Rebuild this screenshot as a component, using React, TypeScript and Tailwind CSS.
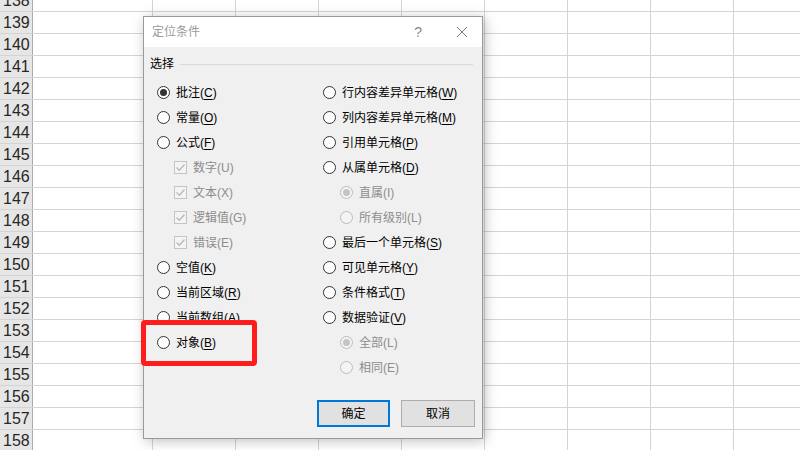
import React from 'react';

const rows = Array.from({ length: 21 }, (_, i) => 138 + i);
const colWidths = [120, 83, 83, 83, 83, 83, 83, 83, 83];

type Item = {
  label: string;
  key?: string;
  kind: 'radio' | 'check';
  checked?: boolean;
  disabled?: boolean;
  indent?: boolean;
};

const leftItems: Item[] = [
  { label: '批注', key: 'C', kind: 'radio', checked: true },
  { label: '常量', key: 'O', kind: 'radio' },
  { label: '公式', key: 'F', kind: 'radio' },
  { label: '数字(U)', kind: 'check', checked: true, disabled: true, indent: true },
  { label: '文本(X)', kind: 'check', checked: true, disabled: true, indent: true },
  { label: '逻辑值(G)', kind: 'check', checked: true, disabled: true, indent: true },
  { label: '错误(E)', kind: 'check', checked: true, disabled: true, indent: true },
  { label: '空值', key: 'K', kind: 'radio' },
  { label: '当前区域', key: 'R', kind: 'radio' },
  { label: '当前数组', key: 'A', kind: 'radio' },
  { label: '对象', key: 'B', kind: 'radio' },
];

const rightItems: Item[] = [
  { label: '行内容差异单元格', key: 'W', kind: 'radio' },
  { label: '列内容差异单元格', key: 'M', kind: 'radio' },
  { label: '引用单元格', key: 'P', kind: 'radio' },
  { label: '从属单元格', key: 'D', kind: 'radio' },
  { label: '直属(I)', kind: 'radio', checked: true, disabled: true, indent: true },
  { label: '所有级别(L)', kind: 'radio', disabled: true, indent: true },
  { label: '最后一个单元格', key: 'S', kind: 'radio' },
  { label: '可见单元格', key: 'Y', kind: 'radio' },
  { label: '条件格式', key: 'T', kind: 'radio' },
  { label: '数据验证', key: 'V', kind: 'radio' },
  { label: '全部(L)', kind: 'radio', checked: true, disabled: true, indent: true },
  { label: '相同(E)', kind: 'radio', disabled: true, indent: true },
];

const Radio = ({ checked, disabled }: { checked?: boolean; disabled?: boolean }) => (
  <span
    className={`flex h-[13px] w-[13px] shrink-0 items-center justify-center rounded-full border ${
      disabled ? 'border-[#bcbcbc] bg-[#f4f4f4]' : 'border-[#333] bg-white'
    }`}
  >
    {checked && (
      <span className={`h-[7px] w-[7px] rounded-full ${disabled ? 'bg-[#c4c4c4]' : 'bg-[#333]'}`} />
    )}
  </span>
);

const Check = () => (
  <span className="flex h-[13px] w-[13px] shrink-0 items-center justify-center border border-[#c4c4c4] bg-[#f4f4f4]">
    <svg width="11" height="11" viewBox="0 0 11 11">
      <path d="M1.5 5.5 L4.3 8.3 L9.5 2.5" fill="none" stroke="#b8b8b8" strokeWidth="1.3" />
    </svg>
  </span>
);

const Option = ({ item }: { item: Item }) => (
  <div className={`flex h-[25px] items-center gap-[6px] ${item.indent ? 'pl-[17px]' : ''}`}>
    {item.kind === 'radio' ? <Radio checked={item.checked} disabled={item.disabled} /> : <Check />}
    <span className={item.disabled ? 'text-[#8d8d8d]' : 'text-[#000]'}>
      {item.label}
      {item.key && (
        <>
          (<span className="underline underline-offset-2">{item.key}</span>)
        </>
      )}
    </span>
  </div>
);

const App = () => {
  return (
    <div
      className="relative h-[450px] w-[800px] overflow-hidden bg-white"
      style={{ fontFamily: '"Liberation Sans", "Noto Sans CJK SC", sans-serif' }}
    >
      {/* sheet grid */}
      <div className="-mt-[10px] flex flex-col">
        {rows.map((r) => (
          <div key={r} className="flex h-[22px] border-b border-[#d4d4d4]">
            <div className="flex w-[33px] shrink-0 items-center border-r border-[#ababab] bg-[#e6e6e6] pl-[3px] text-[16px] text-[#262626]">
              {r}
            </div>
            {colWidths.map((w, i) => (
              <div key={i} className="shrink-0 border-r border-[#d4d4d4]" style={{ width: w }} />
            ))}
          </div>
        ))}
      </div>

      {/* dialog */}
      <div className="absolute left-[143px] top-[16px] flex h-[423px] w-[340px] flex-col border border-[#9a9a9a] bg-[#f0f0f0] text-[12px] shadow-[2px_2px_12px_rgba(0,0,0,0.25)]">
        <div className="flex h-[30px] shrink-0 items-center bg-white pl-[8px] pr-[14px] text-[#9b9b9b]">
          <span className="flex-1">定位条件</span>
          <span className="mr-[34px] text-[14px] text-[#8a8a8a]">?</span>
          <svg width="12" height="12" viewBox="0 0 12 12">
            <path d="M1 1 L11 11 M11 1 L1 11" stroke="#7a7a7a" strokeWidth="1" />
          </svg>
        </div>

        <div className="flex flex-1 flex-col px-[6px] pt-[8px]">
          <div className="flex h-[18px] items-center gap-[6px] text-[#000]">
            <span>选择</span>
            <span className="mr-[3px] h-px flex-1 bg-[#d9d9d9]" />
          </div>

          <div className="mt-[7px] flex">
            <div className="flex w-[173px] flex-col pl-[7px]">
              {leftItems.map((it) => (
                <Option key={it.label} item={it} />
              ))}
            </div>
            <div className="flex flex-col">
              {rightItems.map((it) => (
                <Option key={it.label} item={it} />
              ))}
            </div>
          </div>

          <div className="mt-[20px] flex gap-[11px] pl-[167px]">
            <button className="flex h-[27px] w-[73px] items-center justify-center border-2 border-[#0078d7] bg-[#e1e1e1] text-[#000]">
              确定
            </button>
            <button className="flex h-[27px] w-[74px] items-center justify-center border border-[#adadad] bg-[#e1e1e1] text-[#000]">
              取消
            </button>
          </div>
        </div>
      </div>

      {/* highlight box */}
      <div className="absolute left-[141px] top-[320px] h-[46px] w-[116px] rounded-[4px] border-[5px] border-[#ff1c1c]" />
    </div>
  );
};

export default App;
